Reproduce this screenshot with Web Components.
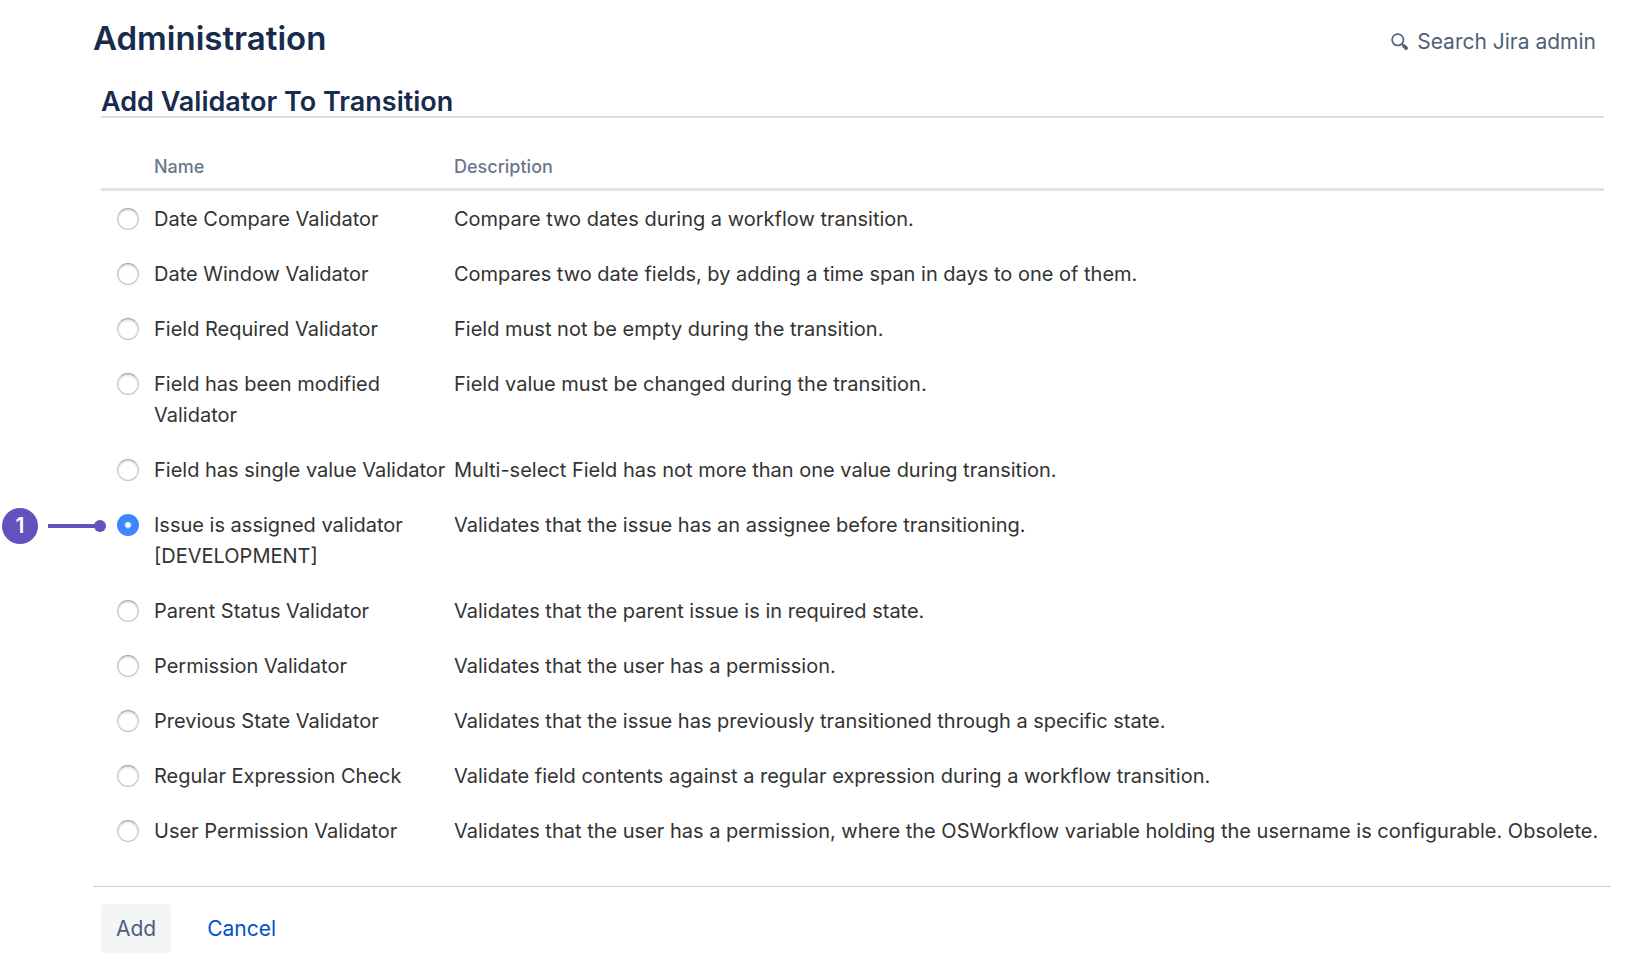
<!DOCTYPE html>
<html lang="en"><head><meta charset="utf-8"><title>Administration</title>
<style>body{margin:0;background:#fff;font-family:Inter,"Liberation Sans",sans-serif;color:#333}</style></head><body>
<admin-page></admin-page>
<script>
const rows=[
["Date Compare Validator","Compare two dates during a workflow transition."],
["Date Window Validator","Compares two date fields, by adding a time span in days to one of them."],
["Field Required Validator","Field must not be empty during the transition."],
["Field has been modified Validator","Field value must be changed during the transition."],
["Field has single value Validator","Multi-select Field has not more than one value during transition."],
["Issue is assigned validator [DEVELOPMENT]","Validates that the issue has an assignee before transitioning."],
["Parent Status Validator","Validates that the parent issue is in required state."],
["Permission Validator","Validates that the user has a permission."],
["Previous State Validator","Validates that the issue has previously transitioned through a specific state."],
["Regular Expression Check","Validate field contents against a regular expression during a workflow transition."],
["User Permission Validator","Validates that the user has a permission, where the OSWorkflow variable holding the username is configurable. Obsolete."]];
const selected=5;

class AdminHeader extends HTMLElement{
  constructor(){super();this.attachShadow({mode:"open"}).innerHTML=`<style>
  :host{display:flex;justify-content:space-between;align-items:center;padding:16px 15px 0 0}
  h1{margin:0;font-size:33px;line-height:44px;font-weight:600;color:#172b4d}
  a{display:flex;align-items:center;gap:8px;margin-top:8px;font-size:21px;line-height:32px;color:#505f79;text-decoration:none}
  svg{display:block}
  </style><h1><slot></slot></h1><a href="#search"><svg width="18" height="18" viewBox="0 0 18 18" fill="none" stroke="#505f79" aria-hidden="true"><circle cx="6.8" cy="6.8" r="5.7" stroke-width="1.7"/><path d="M10.8 10.8L12 12" stroke-width="2"/><path d="M12 12L16.3 16.3" stroke-width="3.4"/></svg><span>Search Jira admin</span></a>`}
}
customElements.define("admin-header",AdminHeader);

class StepMarker extends HTMLElement{
  constructor(){super();this.attachShadow({mode:"open"}).innerHTML=`<style>
  :host{display:flex;align-items:center}
  .number{width:36px;height:36px;border-radius:50%;background:#6550c0;color:#fff;font-size:21px;line-height:36px;font-weight:600;text-align:center}
  .line{width:48px;height:4px;margin-left:10px;background:#6550c0}
  .dot{width:12px;height:12px;margin-left:-2px;border-radius:50%;background:#6550c0}
  </style><span class="number"><slot></slot></span><span class="line"></span><span class="dot"></span>`}
}
customElements.define("step-marker",StepMarker);

class ValidatorTable extends HTMLElement{
  constructor(){super();this.attachShadow({mode:"open"}).innerHTML=`<style>
  :host{display:block;margin-top:24px}
  table{width:100%;border-collapse:separate;border-spacing:0;table-layout:fixed;font-size:20px;line-height:31px;color:#333}
  col.pick{width:45px}col.name{width:300px}
  th,td{text-align:left;vertical-align:top;padding:13px 0 11px 8px}
  thead th,thead td{padding:10px 0 6px 8px;border-bottom:3px solid #dfe1e6}
  th{font-size:18px;line-height:30px;font-weight:500;color:#6b778c}
  .pick{position:relative;padding:17px 0 0 16px}
  input{appearance:none;display:block;box-sizing:border-box;width:22px;height:22px;margin:0;border:1px solid #c4c4c4;border-top-color:#a6a6a6;border-radius:50%;background:#fff;box-shadow:inset 0 1px 2px #ccc}
  input:checked{border:0;box-shadow:none;background:radial-gradient(circle,#fff 2px,#3b87ff 4px)}
  step-marker{position:absolute;right:40px;top:11px}
  </style><table><colgroup><col class="pick"><col class="name"><col></colgroup><thead><tr><td></td><th scope="col">Name</th><th scope="col">Description</th></tr></thead><tbody>${rows.map((r,i)=>`<tr><td class="pick">${i===selected?"<step-marker>1</step-marker>":""}<input type="radio" name="validator" id="v${i}"${i===selected?" checked":""}></td><td><label for="v${i}">${r[0]}</label></td><td>${r[1]}</td></tr>`).join("")}</tbody></table>`}
}
customElements.define("validator-table",ValidatorTable);

class FormActions extends HTMLElement{
  constructor(){super();this.attachShadow({mode:"open"}).innerHTML=`<style>
  :host{display:flex;align-items:center;gap:36px;margin-top:28px;padding:17px 8px;border-top:1px solid #d0d0d0;font-size:21px}
  button{border:0;border-radius:4px;padding:8px 15px;background:#f4f5f7;color:#505f79;font:inherit;line-height:33px}
  a{color:#0052cc;text-decoration:none}
  </style><button type="button">Add</button><a href="#cancel">Cancel</a>`}
}
customElements.define("form-actions",FormActions);

class AdminPage extends HTMLElement{
  constructor(){super();this.attachShadow({mode:"open"}).innerHTML=`<style>
  :host{display:block;padding:0 19px 0 93px}
  main{padding:0 7px 0 8px}
  h2{margin:28px 0 0;font-size:27px;line-height:28px;font-weight:600;color:#172b4d;border-bottom:2px solid #ddd}
  </style><admin-header>Administration</admin-header><main><h2>Add Validator To Transition</h2><validator-table></validator-table></main><form-actions></form-actions>`}
}
customElements.define("admin-page",AdminPage);
</script></body></html>
